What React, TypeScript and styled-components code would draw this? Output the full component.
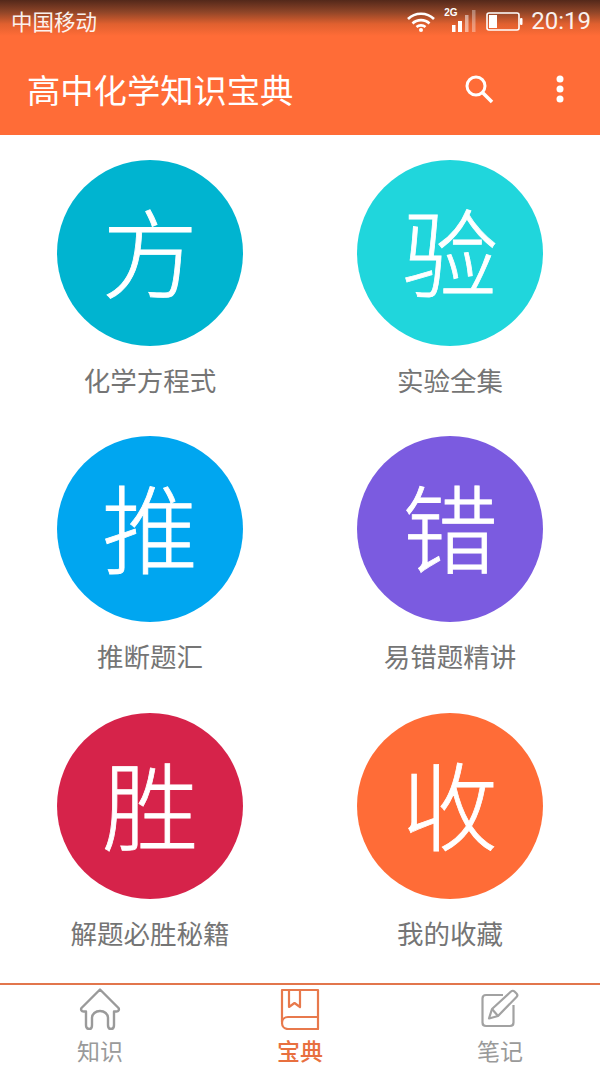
import React from 'react';
import styled, { createGlobalStyle } from 'styled-components';

const FONT = `"Noto Sans CJK SC", "Noto Sans", sans-serif`;

const cards = [
  { glyph: '方', label: '化学方程式', color: '#00b4d0' },
  { glyph: '验', label: '实验全集', color: '#20d6dc' },
  { glyph: '推', label: '推断题汇', color: '#00a6f0' },
  { glyph: '错', label: '易错题精讲', color: '#7b5be0' },
  { glyph: '胜', label: '解题必胜秘籍', color: '#d6234a' },
  { glyph: '收', label: '我的收藏', color: '#ff6c37' },
];

function App() {
  return (
    <Page>
      <GlobalStyle />
      <Header>
        <StatusBar>
          <Carrier>中国移动</Carrier>
          <StatusIcons>
            <svg width="30" height="21" viewBox="0 0 30 21" fill="none" stroke="#fff" strokeWidth="2.6">
              <path d="M2 8c7-7 19-7 26 0" />
              <path d="M6.500 12.500c4.500-4.500 12.500-4.500 17 0" />
              <path d="M10.500 16c2.500-2.200 6.500-2.200 9 0" />
              <circle cx="15" cy="19" r="2" fill="#fff" stroke="none" />
            </svg>
            <Signal>
              <NetLabel>2G</NetLabel>
              <svg width="26" height="22" viewBox="0 0 26 22" fill="#fff">
                <rect x="2" y="15" width="3.500" height="7" />
                <rect x="8" y="11" width="4" height="11" />
                <rect x="15" y="5" width="3.500" height="17" opacity="0.5" />
                <rect x="22" y="0" width="3.500" height="22" opacity="0.35" />
              </svg>
            </Signal>
            <Battery width="37" height="19" viewBox="0 0 37 19" fill="none">
              <rect x="1" y="1" width="32" height="17" rx="2" stroke="#fff" strokeWidth="1.600" />
              <rect x="3" y="3" width="8" height="13" fill="#fff" />
              <rect x="34" y="6" width="2.500" height="7" rx="1" fill="#fff" />
            </Battery>
            <Clock>20:19</Clock>
          </StatusIcons>
        </StatusBar>
        <AppBar>
          <Title>高中化学知识宝典</Title>
          <Actions>
            <svg width="32" height="32" viewBox="0 0 32 32" fill="none" stroke="#fff">
              <circle cx="13" cy="13" r="9" strokeWidth="3" />
              <path d="M19.500 19.500 29 29" strokeWidth="3.600" />
            </svg>
            <svg width="10" height="28" viewBox="0 0 10 28" fill="#fff">
              <circle cx="5" cy="4" r="3.500" />
              <circle cx="5" cy="14" r="3.500" />
              <circle cx="5" cy="24" r="3.500" />
            </svg>
          </Actions>
        </AppBar>
      </Header>

      <Grid>
        {cards.map((card) => (
          <Card key={card.glyph}>
            <Circle $color={card.color}>{card.glyph}</Circle>
            <Label>{card.label}</Label>
          </Card>
        ))}
      </Grid>

      <TabBar>
        <Tab>
          <svg width="42" height="42" viewBox="0 0 42 42" fill="none" stroke="#9a9a9a" strokeWidth="2.400" strokeLinejoin="round">
            <path d="M21 1.500 2.500 20c-1 1.500 0 3.500 2 3.500H7V37c0 2.500 1.500 4 3.500 4S13 39.500 13 37v-7c0-4 3.500-7 8-7s8 3 8 7v7c0 2.500 1 4 3 4s3-1.500 3-4V23.500h2.500c2 0 3-2 2-3.500Z" />
          </svg>
          <TabLabel>知识</TabLabel>
        </Tab>
        <Tab>
          <svg width="42" height="42" viewBox="0 0 42 42" fill="none" stroke="#e8794c" strokeWidth="2.200" strokeLinejoin="round">
            <path d="M3 34V2h36v39H9c-3.500 0-6-2.500-6-6s2.500-6 6-6h30" />
            <path d="M10 2v17l5.500-4 5.500 4V2" />
          </svg>
          <TabLabel $active>宝典</TabLabel>
        </Tab>
        <Tab>
          <svg width="42" height="42" viewBox="0 0 42 42" fill="none" stroke="#a2a2a2" strokeWidth="2.200" strokeLinejoin="round">
            <path d="M24 7H7c-2 0-3.500 1.500-3.500 3.500v24C3.500 36.500 5 38 7 38h24c2 0 3.500-1.500 3.500-3.500V17" />
            <path d="M13 21 32 3.500c1-1 2.500-1 3.500 0l2 2c1 1 1 2.500 0 3.500L19 28l-9 2.500Z" />
            <path d="m13 21 6 7" />
          </svg>
          <TabLabel>笔记</TabLabel>
        </Tab>
      </TabBar>
    </Page>
  );
}

const GlobalStyle = createGlobalStyle`
  html, body {
    margin: 0;
    padding: 0;
    background: #fff;
  }
`;

const Page = styled.div`
  width: 600px;
  height: 1067px;
  display: flex;
  flex-direction: column;
  background: #fff;
  font-family: ${FONT};
  overflow: hidden;
`;

const Header = styled.header`
  height: 135px;
  flex-shrink: 0;
  display: flex;
  flex-direction: column;
  background: linear-gradient(#53281a 0, #8f4528 12px, #e0602f 24px, #ff6c37 36px);
`;

const StatusBar = styled.div`
  height: 42px;
  padding: 0 9px 0 11px;
  display: flex;
  align-items: center;
  justify-content: space-between;
  color: #fff;
`;

const Carrier = styled.span`
  font-size: 21.5px;
  line-height: 1;
  opacity: 0.92;
`;

const StatusIcons = styled.div`
  display: flex;
  align-items: center;
  gap: 8px;
`;

const Signal = styled.div`
  position: relative;
  width: 32px;
  height: 24px;
  margin-bottom: 2px;
  display: flex;
  align-items: flex-end;
  justify-content: flex-end;
`;

const NetLabel = styled.span`
  position: absolute;
  top: 0;
  left: 0;
  font: bold 10px/1 'Liberation Sans', sans-serif;
  color: #fff;
`;

const Battery = styled.svg`
  margin-left: 2px;
`;

const Clock = styled.span`
  font: 24px/1 'Roboto', sans-serif;
  opacity: 0.92;
`;

const AppBar = styled.div`
  flex: 1;
  padding: 0 35px 0 27px;
  display: flex;
  align-items: center;
  justify-content: space-between;
`;

const Title = styled.h1`
  margin: 0;
  font-size: 33.3px;
  font-weight: 400;
  line-height: 1;
  color: #fff;
`;

const Actions = styled.div`
  display: flex;
  align-items: center;
  gap: 60px;
`;

const Grid = styled.main`
  flex: 1;
  min-height: 0;
  padding-top: 25px;
  display: grid;
  grid-template-columns: 1fr 1fr;
  grid-template-rows: 276.4px 276.4px 1fr;
`;

const Card = styled.div`
  display: flex;
  flex-direction: column;
  align-items: center;
`;

const Circle = styled.div<{ $color: string }>`
  width: 186px;
  height: 186px;
  padding-bottom: 8px;
  box-sizing: border-box;
  border-radius: 50%;
  display: flex;
  align-items: center;
  justify-content: center;
  background: ${(p) => p.$color};
  color: #fff;
  font-size: 96px;
  font-weight: 300;
  line-height: 1;
  -webkit-text-stroke: 0.8px #fff;
`;

const Label = styled.div`
  margin-top: 16px;
  font-size: 26.5px;
  line-height: 36px;
  color: #757575;
`;

const TabBar = styled.nav`
  height: 84px;
  flex-shrink: 0;
  border-top: 2px solid #e2764c;
  box-sizing: border-box;
  display: grid;
  grid-template-columns: 1fr 1fr 1fr;
`;

const Tab = styled.div`
  padding-top: 3px;
  display: flex;
  flex-direction: column;
  align-items: center;
  gap: 5px;
`;

const TabLabel = styled.span<{ $active?: boolean }>`
  font-size: 23px;
  line-height: 30px;
  color: ${(p) => (p.$active ? '#e8703f' : '#9a9a9a')};
  font-weight: ${(p) => (p.$active ? 500 : 400)};
`;

export default App;
